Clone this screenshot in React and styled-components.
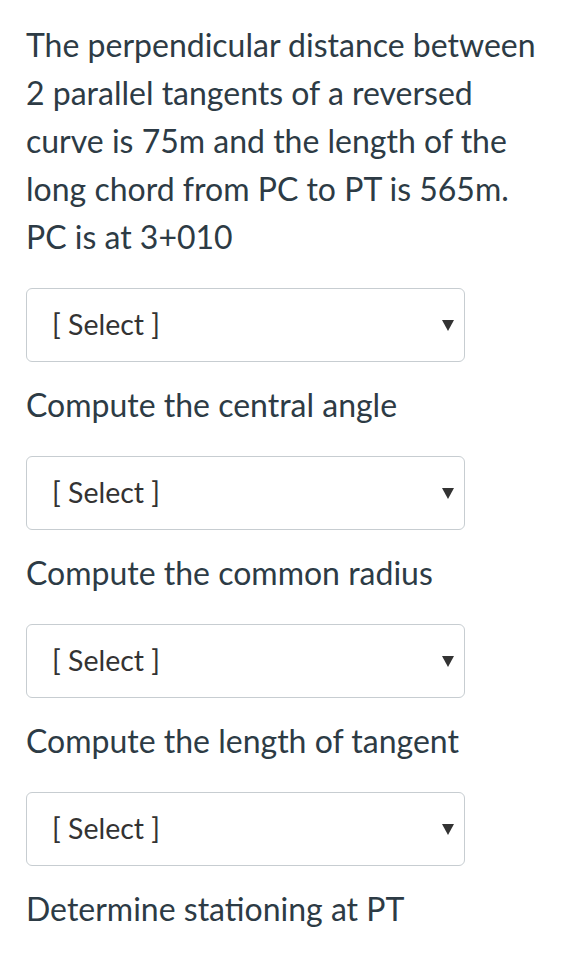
import React from 'react'
import styled, { createGlobalStyle } from 'styled-components'

const GlobalStyle = createGlobalStyle`
  html, body {
    margin: 0;
    padding: 0;
    background: #ffffff;
  }
  body {
    font-family: Lato, 'Noto Sans', sans-serif;
    color: #2d3b45;
  }
`

const Page = styled.div`
  padding: 21px 26px 0 26px;
`

const Text = styled.div`
  font-size: 32px;
  line-height: 48px;
`

const SelectBox = styled.div`
  display: flex;
  align-items: center;
  justify-content: space-between;
  box-sizing: border-box;
  width: 439px;
  height: 74px;
  margin: ${({ $mt }) => $mt}px 0 19px 0;
  padding: 0 10px 3px 25px;
  border: 1.5px solid #c7cdd1;
  border-radius: 6px;
  background: #fff;
  font-size: 28.5px;
  color: #333;
`

const Arrow = styled.span`
  width: 0;
  height: 0;
  margin-top: 3px;
  border-left: 6px solid transparent;
  border-right: 6px solid transparent;
  border-top: 11px solid #333;
`

const Select = ({ mt }) => (
  <SelectBox $mt={mt}>
    <span>[ Select ]</span>
    <Arrow />
  </SelectBox>
)

const App = () => (
  <Page>
    <GlobalStyle />
    <Text>
      The perpendicular distance between 2 parallel tangents of a reversed
      curve is 75m and the length of the long chord from PC to PT is 565m.
      PC is at 3+010
    </Text>
    <Select mt={27} />
    <Text>Compute the central angle</Text>
    <Select mt={27} />
    <Text>Compute the common radius</Text>
    <Select mt={27} />
    <Text>Compute the length of tangent</Text>
    <Select mt={27} />
    <Text>Determine stationing at PT</Text>
  </Page>
)

export default App
